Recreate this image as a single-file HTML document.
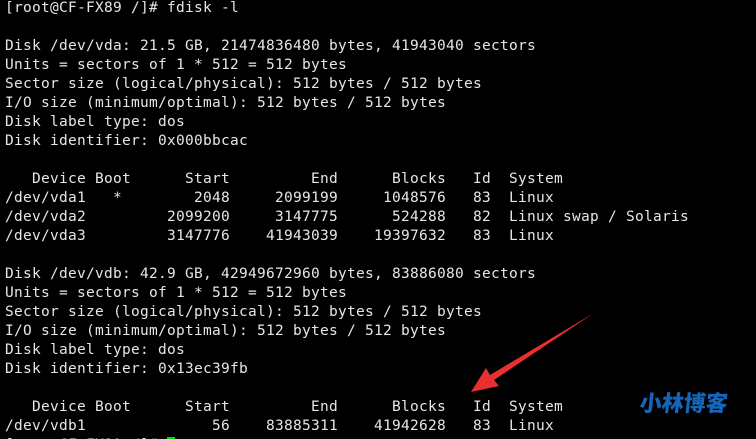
<!DOCTYPE html>
<html><head><meta charset="utf-8"><style>
html,body{margin:0;padding:0;background:#000;width:756px;height:439px;overflow:hidden;position:relative}
pre{margin:0;position:absolute;left:5px;top:-1px;font-family:"DejaVu Sans Mono","Liberation Mono",monospace;font-size:14.5px;letter-spacing:0.27px;line-height:19px;color:#e6e6e6;white-space:pre}
.cur{display:inline-block;width:8px;height:15px;background:#00e000;vertical-align:-3px}
.logo{position:absolute;left:640px;top:386px;font-family:"Noto Sans CJK SC","WenQuanYi Zen Hei",sans-serif;font-weight:900;font-size:22px;color:#1565b8;transform:skewX(-6deg)}
</style></head><body>
<pre>[root@CF-FX89 /]# fdisk -l

Disk /dev/vda: 21.5 GB, 21474836480 bytes, 41943040 sectors
Units = sectors of 1 * 512 = 512 bytes
Sector size (logical/physical): 512 bytes / 512 bytes
I/O size (minimum/optimal): 512 bytes / 512 bytes
Disk label type: dos
Disk identifier: 0x000bbcac

   Device Boot      Start         End      Blocks   Id  System
/dev/vda1   *        2048     2099199     1048576   83  Linux
/dev/vda2         2099200     3147775      524288   82  Linux swap / Solaris
/dev/vda3         3147776    41943039    19397632   83  Linux

Disk /dev/vdb: 42.9 GB, 42949672960 bytes, 83886080 sectors
Units = sectors of 1 * 512 = 512 bytes
Sector size (logical/physical): 512 bytes / 512 bytes
I/O size (minimum/optimal): 512 bytes / 512 bytes
Disk label type: dos
Disk identifier: 0x13ec39fb

   Device Boot      Start         End      Blocks   Id  System
/dev/vdb1              56    83885311    41942628   83  Linux
[root@CF-FX89 /]# <span class="cur"></span></pre>
<svg style="position:absolute;left:0;top:0" width="756" height="439">
<polygon points="594,313 490,375 486,368 471,392 499,386 494,380" fill="#e83030"/>
</svg>
<div class="logo">小林博客</div>
</body></html>
